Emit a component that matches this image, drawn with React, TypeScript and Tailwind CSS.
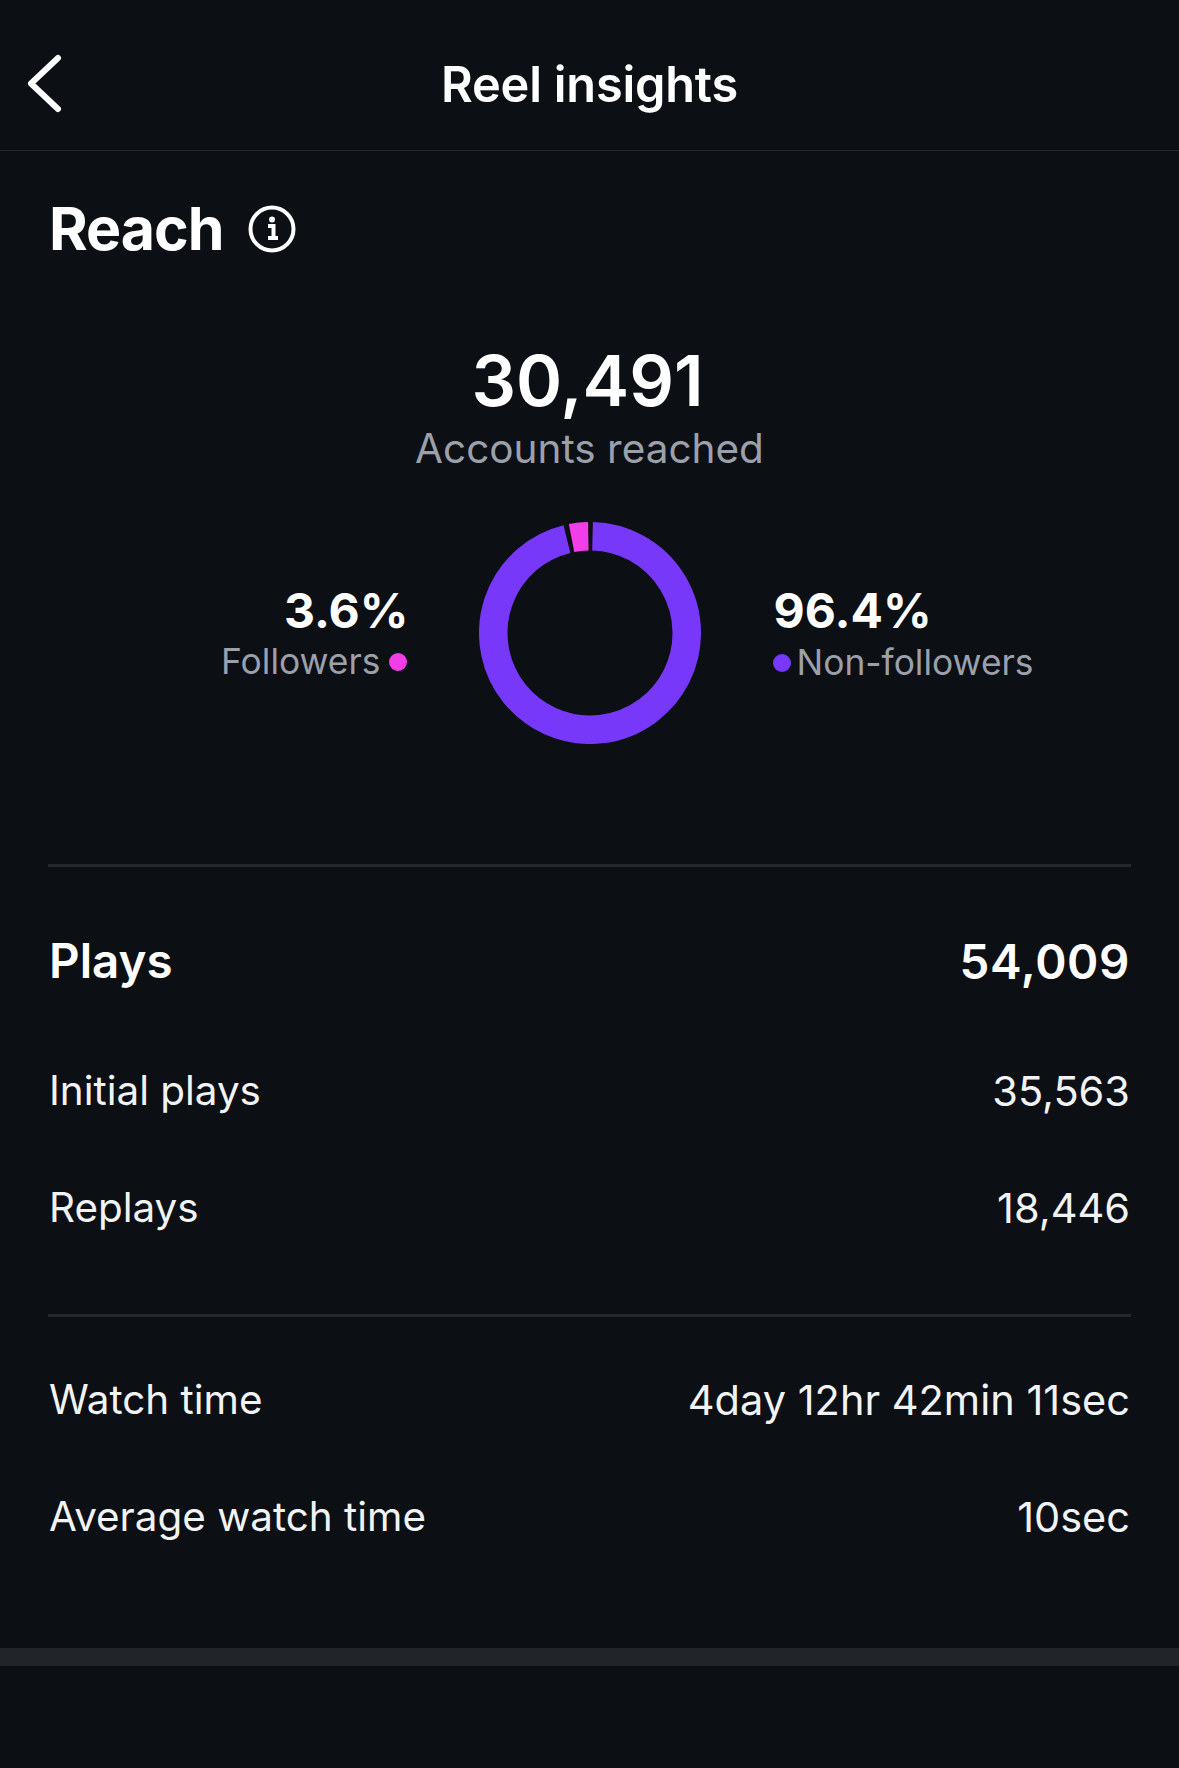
const font = { fontFamily: 'Inter, "Liberation Sans", sans-serif' };

function Row({ label, value, bold }: { label: string; value: string; bold?: boolean }) {
  return (
    <div className={`flex h-[48px] items-center justify-between ${bold ? "font-semibold text-white" : "text-[#f2f3f5]"}`}>
      <span className={bold ? "text-[47.5px]" : "text-[40.4px]"}>{label}</span>
      <span className={bold ? "pt-[2px] text-[47.5px] tracking-[0.6px]" : "text-[41.5px]"}>{value}</span>
    </div>
  );
}

function arc(from: number, to: number) {
  const r = 96.75;
  const pt = (a: number) => {
    const t = ((a - 90) * Math.PI) / 180;
    return `${111 + r * Math.cos(t)} ${111 + r * Math.sin(t)}`;
  };
  const large = to - from > 180 ? 1 : 0;
  return `M${pt(from)} A${r} ${r} 0 ${large} 1 ${pt(to)}`;
}

export default function App() {
  return (
    <div style={font} className="h-[1768px] w-[1179px] overflow-hidden bg-[#0c0f14] text-white">
      <header className="relative flex h-[151px] items-center justify-center border-b border-[#24272c] pt-[20px]">
        <svg className="absolute left-[26px] top-[53px]" width="36" height="62" viewBox="0 0 36 62" fill="none">
          <path d="M32 5 L5 30.5 L32 56" stroke="#fff" strokeWidth="6" strokeLinecap="round" strokeLinejoin="round" />
        </svg>
        <h1 className="text-[48.7px] font-semibold tracking-[-0.2px]">Reel insights</h1>
      </header>

      <section className="px-[49px] pt-[47px]">
        <div className="flex h-[62px] items-center gap-[25px]">
          <h2 className="text-[59px] font-bold tracking-[-1px]">Reach</h2>
          <svg width="48" height="48" viewBox="0 0 48 48" fill="none">
            <circle cx="24" cy="24" r="21.5" stroke="#fff" strokeWidth="4" />
            <circle cx="24" cy="14.5" r="3" fill="#fff" />
            <path d="M20 21 H25.5 V32 M20 33 H30" stroke="#fff" strokeWidth="4" />
          </svg>
        </div>

        <div className="mt-[81px] flex flex-col items-center">
          <div className="pr-[4px] text-[70px] font-semibold leading-[80px]">30,491</div>
          <div className="mt-[4px] text-[40.5px] leading-[48px] text-[#9ba0ab]">Accounts reached</div>
        </div>

        <div className="mt-[49px] grid grid-cols-[1fr_auto_1fr] items-center">
          <div className="flex flex-col items-end pt-[3px]">
            <div className="-mr-[2px] -mt-[1px] text-[48px] font-bold leading-[54px]">3.6%</div>
            <div className="mt-[2px] flex items-center gap-[8px] whitespace-nowrap text-[35.4px] leading-[44px] text-[#9ba0ab]">
              <span>Followers</span>
              <span className="h-[18px] w-[18px] shrink-0 rounded-full bg-[#f23ee8]" />
            </div>
          </div>
          <svg className="mx-[72px]" width="222" height="222" viewBox="0 0 222 222" fill="none">
            <path d={arc(1.5, 346.2)} stroke="#7738f9" strokeWidth="28.5" />
            <path d={arc(349, 359)} stroke="#f23ee8" strokeWidth="28.5" />
          </svg>
          <div className="flex flex-col items-start pt-[3px]">
            <div className="-mt-[1px] ml-[1px] text-[48px] font-bold leading-[54px]">96.4%</div>
            <div className="mt-[3px] flex items-center gap-[6px] whitespace-nowrap text-[35.4px] leading-[44px] text-[#9ba0ab]">
              <span className="h-[18px] w-[18px] shrink-0 rounded-full bg-[#7738f9]" />
              <span>Non-followers</span>
            </div>
          </div>
        </div>

        <div className="mt-[120px] -mx-[1px] h-[3px] bg-[#24272c]" />

        <div className="mt-[70px]">
          <Row label="Plays" value="54,009" bold />
        </div>
        <div className="mt-[82px]">
          <Row label="Initial plays" value="35,563" />
        </div>
        <div className="mt-[69px]">
          <Row label="Replays" value="18,446" />
        </div>

        <div className="mt-[82px] -mx-[1px] h-[3px] bg-[#24272c]" />

        <div className="mt-[59px]">
          <Row label="Watch time" value="4day 12hr 42min 11sec" />
        </div>
        <div className="mt-[69px]">
          <Row label="Average watch time" value="10sec" />
        </div>
      </section>

      <div className="mt-[107px] h-[18px] bg-[#212428]" />
    </div>
  );
}
